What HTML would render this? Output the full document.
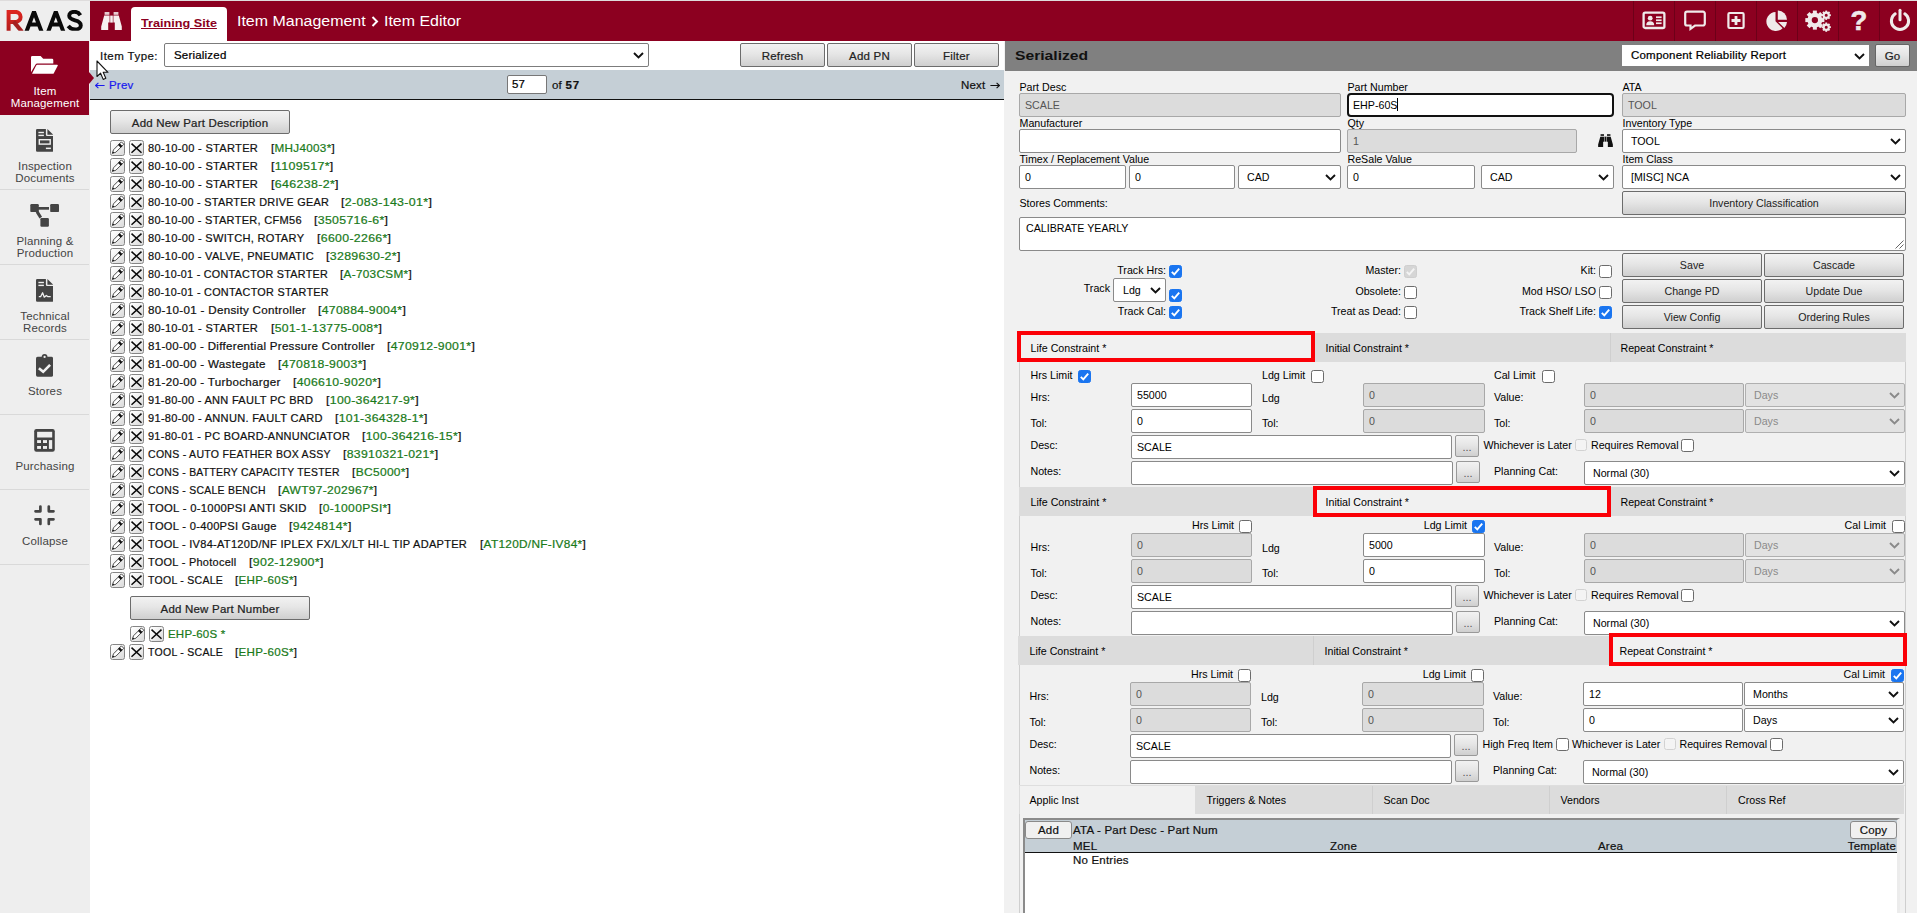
<!DOCTYPE html><html><head><meta charset="utf-8"><title>Item Editor</title><style>
*{box-sizing:border-box;margin:0;padding:0}
html,body{width:1917px;height:913px;overflow:hidden;background:#fff}
body{font-family:"Liberation Sans",sans-serif;font-size:12px;color:#000;position:relative}
.abs{position:absolute}
.v{font-family:"Liberation Sans",sans-serif;font-size:11.5px;letter-spacing:.2px;white-space:nowrap;-webkit-text-stroke:.22px}
.a{font-family:"Liberation Sans",sans-serif;font-size:10.67px;white-space:nowrap;color:#000}
#hdr{left:90px;top:0;width:1827px;height:41px;background:#8c0020}
#topline{left:0;top:0;width:1917px;height:1px;background:#dedcdc}
#logo{left:0;top:0;width:90px;height:41px;background:#eeeeee}
#side{left:0;top:41px;width:90px;height:872px;background:#eeeeee}
.sitem{position:absolute;left:0;width:89px;height:75px;border-bottom:1px solid #d9d9d9;text-align:center;color:#444}
.sitem .t{position:absolute;left:0;width:90px;text-align:center;font-size:11.5px;letter-spacing:.15px;line-height:12px;color:#444}
.sitem.act{background:#8c0020;border-bottom:none}
.sitem.act .t{color:#fff}
.sitem svg{position:absolute}
.btn{position:absolute;border:1px solid #6c6c6c;border-radius:2px;background:linear-gradient(#f2f2f2,#e6e6e6 45%,#cfcfcf);color:#222;text-align:center;white-space:nowrap}
.inp{position:absolute;border:1px solid #8a8a8a;border-radius:2px;background:#fff;height:24px;font-size:10.67px;line-height:22px;padding-left:5px;color:#000;white-space:nowrap;overflow:hidden}
.inp.dis{background:#dcdcdc;color:#555;border-color:#a8a8a8}
.sel{position:absolute;border:1px solid #8a8a8a;border-radius:2px;background:#fff;height:24px;font-size:10.67px;line-height:22px;padding-left:8px;color:#000;white-space:nowrap;overflow:hidden}
.sel.dis{background:#e2e2e2;color:#8a8a8a;border-color:#b0b0b0}
.sel svg{position:absolute;right:4px;top:7.5px}
.cb{position:absolute;width:13px;height:13px;border:1px solid #6b6b6b;border-radius:2.5px;background:#fff}
.cb.on{background:#1a75f0;border-color:#1a75f0}
.cb.dison{background:#d6d6d6;border-color:#cfcfcf}
.cb.disoff{background:#f4f4f4;border-color:#d2d2d2}
.cb svg{position:absolute;left:-1px;top:-1px}
.row{position:absolute;left:110px;height:18px}
.ib{position:absolute;top:0;width:15px;height:16px;border:1px solid #858585;border-radius:2.5px;background:linear-gradient(135deg,#fbfbfb 20%,#d9d9d9)}
.ib svg{position:absolute;left:0;top:0}
.row .tx{position:absolute;left:38px;top:1px;line-height:14px;color:#111}
.row .tx b{font-weight:normal;color:#1a7a1a}
.tabrow{position:absolute;background:#dcdcdc}
.tabsep{position:absolute;width:1px;background:#cfcfcf}
.redbox{position:absolute;border:4px solid #fb0007;background:#f1f1f1}
</style></head><body>
<div class="abs" id="hdr"></div>
<div class="abs" id="logo"></div>
<svg class="abs" style="left:0;top:0" width="90" height="41" viewBox="0 0 90 41"><defs><linearGradient id="rg" x1="0" y1="0" x2="0" y2="1"><stop offset="0" stop-color="#dc2620"/><stop offset="1" stop-color="#b01c1c"/></linearGradient><clipPath id="lc"><rect x="0" y="10" width="90" height="20.8"/></clipPath></defs><g clip-path="url(#lc)"><path d="M8.6 32 V11.9 H15.6 a5 5 0 0 1 0 10 H9.5" fill="none" stroke="url(#rg)" stroke-width="4" stroke-linejoin="miter"/><path d="M13.6 21.6 L22 31.8" fill="none" stroke="#a51f1f" stroke-width="4.1"/><path d="M26.3 32 L34 11.6 L41.7 32 M29.6 24.6 H38.4" fill="none" stroke="#0a0a0a" stroke-width="4" stroke-linejoin="miter" stroke-miterlimit="2"/><path d="M48.1 32 L55.8 11.6 L63.5 32 M51.4 24.6 H60.2" fill="none" stroke="#0a0a0a" stroke-width="4" stroke-linejoin="miter" stroke-miterlimit="2"/><path d="M80.4 15.2 C79 13 77 11.8 74.4 11.8 C71.3 11.8 69.2 13.4 69.2 15.8 C69.2 18.6 71.6 19.4 75 20.3 C78.6 21.2 80.8 22.4 80.8 25.4 C80.8 28 78.4 29.5 75.2 29.5 C72.4 29.5 70 28.3 68.2 26" fill="none" stroke="#0a0a0a" stroke-width="3.9"/></svg>
<div class="abs" id="topline"></div>
<svg class="abs" style="left:100.5px;top:11.5px" width="21" height="18" viewBox="0 0 21 18"><g fill="#f6efef"><path d="M3.2 3.6 H8.6 V10.6 H7.2 V18 H0.2 V14.6 Z"/><path d="M17.8 3.6 H12.4 V10.6 H13.8 V18 H20.8 V14.6 Z"/><rect x="9.2" y="3.6" width="2.6" height="7"/><rect x="3.6" y="0" width="4.8" height="2.8" opacity=".85"/><rect x="12.6" y="0" width="4.8" height="2.8" opacity=".85"/></g></svg>
<div class="abs" style="left:131px;top:7px;width:96px;height:34px;background:#fff;border-radius:4px 4px 0 0"></div>
<div class="abs" style="left:141px;top:16px;font-size:11.5px;font-weight:bold;color:#8c0020;text-decoration:underline;white-space:nowrap;line-height:14px;transform-origin:0 0;transform:scaleX(1.10)">Training Site</div>
<div class="abs" style="left:237px;top:12px;font-size:14px;color:#fff;white-space:nowrap;line-height:18px;transform-origin:0 0;transform:scaleX(1.14)">Item Management</div>
<div class="abs" style="left:384px;top:12px;font-size:14px;color:#fff;white-space:nowrap;line-height:18px;transform-origin:0 0;transform:scaleX(1.14)">Item Editor</div>
<svg class="abs" style="left:371px;top:16px" width="8" height="11" viewBox="0 0 8 11"><path d="M1.5 1 L6 5.5 L1.5 10" fill="none" stroke="#fff" stroke-width="2"/></svg>
<div class="abs" style="left:1633px;top:1px;width:1px;height:40px;background:#6d0018"></div>
<div class="abs" style="left:1674px;top:1px;width:1px;height:40px;background:#6d0018"></div>
<div class="abs" style="left:1715px;top:1px;width:1px;height:40px;background:#6d0018"></div>
<div class="abs" style="left:1756px;top:1px;width:1px;height:40px;background:#6d0018"></div>
<div class="abs" style="left:1797px;top:1px;width:1px;height:40px;background:#6d0018"></div>
<div class="abs" style="left:1838px;top:1px;width:1px;height:40px;background:#6d0018"></div>
<div class="abs" style="left:1879px;top:1px;width:1px;height:40px;background:#6d0018"></div>
<svg class="abs" style="left:1642px;top:8px" width="24" height="24" viewBox="0 0 24 24"><rect x="1.6" y="4.6" width="20.8" height="15.4" rx="1.6" fill="none" stroke="#f0eaea" stroke-width="2.3"/><circle cx="8.2" cy="10.2" r="2.4" fill="#f0eaea"/><path d="M4.2 17.2 q0 -4 4 -4 q4 0 4 4 z" fill="#f0eaea"/><rect x="14" y="8.4" width="5.6" height="1.7" fill="#f0eaea"/><rect x="14" y="11.4" width="5.6" height="1.7" fill="#f0eaea"/><rect x="14" y="14.4" width="5.6" height="1.7" fill="#f0eaea"/></svg>
<svg class="abs" style="left:1683px;top:8px" width="24" height="24" viewBox="0 0 24 24"><path d="M4 3.7 h16 a1.8 1.8 0 0 1 1.8 1.8 v10.2 a1.8 1.8 0 0 1 -1.8 1.8 h-8 l-4.5 3.4 v-3.4 h-3.5 a1.8 1.8 0 0 1 -1.8 -1.8 v-10.2 a1.8 1.8 0 0 1 1.8 -1.8 z" fill="none" stroke="#f0eaea" stroke-width="2.2"/></svg>
<svg class="abs" style="left:1724px;top:8px" width="24" height="24" viewBox="0 0 24 24"><rect x="4.4" y="5" width="15.2" height="15" rx="1.2" fill="none" stroke="#f0eaea" stroke-width="2.2"/><path d="M12 8 v9 M7.5 12.5 h9" stroke="#f0eaea" stroke-width="2.8"/></svg>
<svg class="abs" style="left:1765px;top:8px" width="24" height="24" viewBox="0 0 24 24"><g transform="translate(0,1)"><path d="M10.5 3 A9.5 9.5 0 1 0 17.6 19.2 L10.5 12.2 Z" fill="#f0eaea"/><path d="M12.8 1.6 A9.2 9.2 0 0 1 22 10.8 L12.8 10.8 Z" fill="#f0eaea"/><path d="M13.2 13 L22 13 A9.3 9.3 0 0 1 19.4 18.9 Z" fill="#f0eaea"/></g></svg>
<svg class="abs" style="left:1805px;top:7px" width="26" height="26" viewBox="0 0 24 24"><circle cx="9.1" cy="12.1" r="4.882" fill="none" stroke="#f0eaea" stroke-width="3.964"/><rect x="7.252" y="3.3" width="3.696" height="4.4" fill="#f0eaea" transform="rotate(0 9.1 12.1)"/><rect x="7.252" y="3.3" width="3.696" height="4.4" fill="#f0eaea" transform="rotate(45 9.1 12.1)"/><rect x="7.252" y="3.3" width="3.696" height="4.4" fill="#f0eaea" transform="rotate(90 9.1 12.1)"/><rect x="7.252" y="3.3" width="3.696" height="4.4" fill="#f0eaea" transform="rotate(135 9.1 12.1)"/><rect x="7.252" y="3.3" width="3.696" height="4.4" fill="#f0eaea" transform="rotate(180 9.1 12.1)"/><rect x="7.252" y="3.3" width="3.696" height="4.4" fill="#f0eaea" transform="rotate(225 9.1 12.1)"/><rect x="7.252" y="3.3" width="3.696" height="4.4" fill="#f0eaea" transform="rotate(270 9.1 12.1)"/><rect x="7.252" y="3.3" width="3.696" height="4.4" fill="#f0eaea" transform="rotate(315 9.1 12.1)"/><circle cx="19.6" cy="7.6" r="2.377" fill="none" stroke="#f0eaea" stroke-width="1.954"/><rect x="18.75" y="3.3" width="1.7" height="2.15" fill="#f0eaea" transform="rotate(0 19.6 7.6)"/><rect x="18.75" y="3.3" width="1.7" height="2.15" fill="#f0eaea" transform="rotate(45 19.6 7.6)"/><rect x="18.75" y="3.3" width="1.7" height="2.15" fill="#f0eaea" transform="rotate(90 19.6 7.6)"/><rect x="18.75" y="3.3" width="1.7" height="2.15" fill="#f0eaea" transform="rotate(135 19.6 7.6)"/><rect x="18.75" y="3.3" width="1.7" height="2.15" fill="#f0eaea" transform="rotate(180 19.6 7.6)"/><rect x="18.75" y="3.3" width="1.7" height="2.15" fill="#f0eaea" transform="rotate(225 19.6 7.6)"/><rect x="18.75" y="3.3" width="1.7" height="2.15" fill="#f0eaea" transform="rotate(270 19.6 7.6)"/><rect x="18.75" y="3.3" width="1.7" height="2.15" fill="#f0eaea" transform="rotate(315 19.6 7.6)"/><circle cx="19.6" cy="18.6" r="2.377" fill="none" stroke="#f0eaea" stroke-width="1.954"/><rect x="18.75" y="14.3" width="1.7" height="2.15" fill="#f0eaea" transform="rotate(0 19.6 18.6)"/><rect x="18.75" y="14.3" width="1.7" height="2.15" fill="#f0eaea" transform="rotate(45 19.6 18.6)"/><rect x="18.75" y="14.3" width="1.7" height="2.15" fill="#f0eaea" transform="rotate(90 19.6 18.6)"/><rect x="18.75" y="14.3" width="1.7" height="2.15" fill="#f0eaea" transform="rotate(135 19.6 18.6)"/><rect x="18.75" y="14.3" width="1.7" height="2.15" fill="#f0eaea" transform="rotate(180 19.6 18.6)"/><rect x="18.75" y="14.3" width="1.7" height="2.15" fill="#f0eaea" transform="rotate(225 19.6 18.6)"/><rect x="18.75" y="14.3" width="1.7" height="2.15" fill="#f0eaea" transform="rotate(270 19.6 18.6)"/><rect x="18.75" y="14.3" width="1.7" height="2.15" fill="#f0eaea" transform="rotate(315 19.6 18.6)"/></svg>
<div class="abs" style="left:1845px;top:4px;width:28px;height:34px;text-align:center;font-size:27.5px;line-height:34px;font-weight:bold;color:#f0eaea;-webkit-text-stroke:.6px #f0eaea">?</div>
<svg class="abs" style="left:1888px;top:8px" width="24" height="24" viewBox="0 0 24 24"><path d="M7.2 5.8 A8.6 8.6 0 1 0 16.8 5.8" fill="none" stroke="#f0eaea" stroke-width="3" stroke-linecap="round"/><path d="M12 2.2 v9.5" stroke="#f0eaea" stroke-width="3" stroke-linecap="round"/></svg>
<div class="abs" id="side"></div>
<div class="sitem act" style="top:41px;height:74px"><svg style="left:31px;top:15.2px" width="27" height="18" viewBox="0 0 27 18"><path d="M0 1.3 a1.3 1.3 0 0 1 1.3 -1.3 H9.6 L12.2 2.8 H21 a1.3 1.3 0 0 1 1.3 1.3 V7.6 H6.4 a2.2 2.2 0 0 0 -2 1.2 L0 16.2 Z" fill="#fff"/><path d="M6.2 8.7 H26.1 a.7 .7 0 0 1 .6 1 L22.8 17.2 a1 1 0 0 1 -.9 .5 H1 L5.2 9.4 a1.1 1.1 0 0 1 1 -.7 Z" fill="#fff"/></svg><div class="t" style="top:44px">Item</div><div class="t" style="top:56px">Management</div></div>
<div class="sitem" style="top:115px;height:75px"><svg style="left:36px;top:14px" width="17.3" height="22.8" viewBox="0 0 17.3 22.8"><path d="M0 1.2 a1.2 1.2 0 0 1 1.2 -1.2 H9.9 V5.7 a1.3 1.3 0 0 0 1.3 1.3 H17.3 V21.6 a1.2 1.2 0 0 1 -1.2 1.2 H1.2 a1.2 1.2 0 0 1 -1.2 -1.2 Z M11.4 0 L17.3 5.7 H11.4 Z" fill="#444"/><rect x="2.4" y="2.8" width="5.5" height="1.4" fill="#f0f0f0"/><rect x="2.4" y="5.7" width="5.5" height="1.4" fill="#f0f0f0"/><rect x="3.3" y="10.7" width="10.9" height="4.4" fill="none" stroke="#f0f0f0" stroke-width="1.4"/><rect x="9.9" y="18.6" width="5" height="1.5" fill="#f0f0f0"/></svg><div class="t" style="top:45px">Inspection</div><div class="t" style="top:57px">Documents</div></div>
<div class="sitem" style="top:190px;height:75px"><svg style="left:30px;top:14px" width="30" height="24" viewBox="0 0 30 24"><rect x="0.3" y="0" width="8.5" height="8.1" rx="1.2" fill="#444"/><rect x="20.2" y="0" width="8.8" height="8.1" rx="1.2" fill="#444"/><rect x="10.4" y="14" width="8.5" height="8.8" rx="1.2" fill="#444"/><rect x="8" y="3" width="11" height="2.7" fill="#444"/><path d="M7 7.6 L10.8 13.6" stroke="#444" stroke-width="3"/></svg><div class="t" style="top:45px">Planning &amp;</div><div class="t" style="top:57px">Production</div></div>
<div class="sitem" style="top:265px;height:75px"><svg style="left:36px;top:14px" width="17.3" height="22.8" viewBox="0 0 17.3 22.8"><path d="M0 1.2 a1.2 1.2 0 0 1 1.2 -1.2 H9.9 V5.7 a1.3 1.3 0 0 0 1.3 1.3 H17.3 V21.6 a1.2 1.2 0 0 1 -1.2 1.2 H1.2 a1.2 1.2 0 0 1 -1.2 -1.2 Z M11.4 0 L17.3 5.7 H11.4 Z" fill="#444"/><rect x="2.4" y="2.8" width="5.5" height="1.4" fill="#f0f0f0"/><rect x="2.4" y="5.7" width="5.5" height="1.4" fill="#f0f0f0"/><path d="M2.8 17.7 H4.6 L6.6 13.8 L8.3 18.2 L10.3 16.4 L12 17.7 H14.7" fill="none" stroke="#f0f0f0" stroke-width="1.3" stroke-linejoin="round"/></svg><div class="t" style="top:45px">Technical</div><div class="t" style="top:57px">Records</div></div>
<div class="sitem" style="top:340px;height:75px"><svg style="left:36px;top:14px" width="17.2" height="23" viewBox="0 0 17.2 23"><rect x="0" y="2.8" width="17.1" height="19.9" rx="1.6" fill="#444"/><circle cx="8.6" cy="2.9" r="2.9" fill="#444"/><circle cx="8.6" cy="2.9" r="1.15" fill="#eee"/><path d="M2.9 14.2 L7.2 17.8 L14.1 10.9" fill="none" stroke="#f2f2f2" stroke-width="2.6"/></svg><div class="t" style="top:45px">Stores</div></div>
<div class="sitem" style="top:415px;height:75px"><svg style="left:34px;top:14px" width="21" height="23" viewBox="0 0 21 23"><rect x="0.2" y="0" width="20.6" height="22.8" rx="2.2" fill="#444"/><rect x="3.1" y="2.8" width="15.1" height="5.7" fill="#eee"/><rect x="3.1" y="11.1" width="3.9" height="2.9" fill="#eee"/><rect x="9" y="11.1" width="4" height="2.9" fill="#eee"/><rect x="3.1" y="17" width="3.9" height="2.9" fill="#eee"/><rect x="9" y="17" width="4" height="2.9" fill="#eee"/><rect x="14.9" y="11.1" width="3.3" height="8.8" fill="#eee"/></svg><div class="t" style="top:45px">Purchasing</div></div>
<div class="sitem" style="top:490px;height:75px"><svg style="left:34px;top:15px" width="21" height="21" viewBox="0 0 21 21"><path d="M1.5 6.3 H6.4 V1.6 M14.8 1.6 V6.3 H19.5 M1.5 14.3 H6.4 V19 M19.5 14.3 H14.8 V19" fill="none" stroke="#444" stroke-width="2.7" stroke-linecap="round" stroke-linejoin="round"/></svg><div class="t" style="top:45px">Collapse</div></div>
<svg class="abs" style="left:88px;top:71.5px;z-index:5" width="7" height="12" viewBox="0 0 7 12"><path d="M0 0 H1 L6 6 L1 12 H0 z" fill="#8c0020"/></svg>
<div class="abs v" style="left:100px;top:48px;line-height:16px;color:#111;letter-spacing:.45px">Item Type:</div>
<div class="sel v" style="left:164px;top:43px;width:485px;height:24px;line-height:23px;padding-left:9px;font-size:11.5px;border-color:#7c7c7c">Serialized<svg width="11" height="7" viewBox="0 0 11 7"><path d="M1 1 L5.5 5.5 L10 1" fill="none" stroke="#111" stroke-width="1.9"/></svg></div>
<div class="btn v" style="left:740px;top:43px;width:85px;height:24px;line-height:24px;font-size:11.5px">Refresh</div>
<div class="btn v" style="left:827px;top:43px;width:85px;height:24px;line-height:24px;font-size:11.5px">Add PN</div>
<div class="btn v" style="left:914px;top:43px;width:85px;height:24px;line-height:24px;font-size:11.5px">Filter</div>
<div class="abs" style="left:90px;top:70px;width:914px;height:30px;background:#c5cfd6;border-bottom:1px solid #111"></div>
<svg class="abs" style="left:95px;top:82px" width="10" height="7" viewBox="0 0 10 7"><path d="M0.6 3.5 H9.6 M3.4 0.8 L0.6 3.5 L3.4 6.2" fill="none" stroke="#1a1aee" stroke-width="1.1"/></svg>
<div class="abs v" style="left:109px;top:77px;color:#1a1aee;line-height:16px">Prev</div>
<div class="abs v" style="left:961px;top:77px;color:#111;line-height:16px">Next</div>
<svg class="abs" style="left:990px;top:82px" width="10" height="7" viewBox="0 0 10 7"><path d="M0.4 3.5 H9.4 M6.6 0.8 L9.4 3.5 L6.6 6.2" fill="none" stroke="#111" stroke-width="1.1"/></svg>
<div class="inp v" style="left:507px;top:75px;width:40px;height:19px;line-height:17px;padding-left:4px;font-size:11.5px;border-color:#777">57</div>
<div class="abs v" style="left:552px;top:77px;color:#111;line-height:16px">of <b style="letter-spacing:.9px">57</b></div>
<div class="btn v" style="left:110px;top:110px;width:180px;height:24px;line-height:24.5px;font-size:11.5px">Add New Part Description</div>
<div class="row" style="top:140px;left:110px"><div class="ib" style="left:0"><svg width="15" height="16" viewBox="0 0 15 16" style="left:-1px;top:-1px"><g transform="translate(2.3,13.4) rotate(-45)"><path d="M0 0 L3.4 -1.7 L14.6 -1.7 L14.6 1.7 L3.4 1.7 Z" fill="#fff" stroke="#3a3a3a" stroke-width=".85" stroke-linejoin="round"/><path d="M0 0 L1.9 -0.95 L1.9 0.95 Z" fill="#111"/><rect x="10" y="-2" width="2.3" height="4" fill="#111"/></g></svg></div><div class="ib" style="left:19px"><svg width="15" height="16" viewBox="0 0 15 16" style="left:-1px;top:-1px"><path d="M2.5 3.6 L12.5 12.7 M12.5 3.6 L2.5 12.7" stroke="#0a0a0a" stroke-width="1.5"/></svg></div><div class="tx v" style="left:37.8px;letter-spacing:.3px;transform-origin:0 0;transform:scaleX(0.9641)">80-10-00 - STARTER</div><div class="tx v" style="left:160.568px;letter-spacing:.3px;transform-origin:0 0;transform:scaleX(1.0148)">[<b>MHJ4003*</b>]</div></div>
<div class="row" style="top:158px;left:110px"><div class="ib" style="left:0"><svg width="15" height="16" viewBox="0 0 15 16" style="left:-1px;top:-1px"><g transform="translate(2.3,13.4) rotate(-45)"><path d="M0 0 L3.4 -1.7 L14.6 -1.7 L14.6 1.7 L3.4 1.7 Z" fill="#fff" stroke="#3a3a3a" stroke-width=".85" stroke-linejoin="round"/><path d="M0 0 L1.9 -0.95 L1.9 0.95 Z" fill="#111"/><rect x="10" y="-2" width="2.3" height="4" fill="#111"/></g></svg></div><div class="ib" style="left:19px"><svg width="15" height="16" viewBox="0 0 15 16" style="left:-1px;top:-1px"><path d="M2.5 3.6 L12.5 12.7 M12.5 3.6 L2.5 12.7" stroke="#0a0a0a" stroke-width="1.5"/></svg></div><div class="tx v" style="left:37.8px;letter-spacing:.3px;transform-origin:0 0;transform:scaleX(0.9641)">80-10-00 - STARTER</div><div class="tx v" style="left:160.568px;letter-spacing:.3px;transform-origin:0 0;transform:scaleX(1.0840)">[<b>1109517*</b>]</div></div>
<div class="row" style="top:176px;left:110px"><div class="ib" style="left:0"><svg width="15" height="16" viewBox="0 0 15 16" style="left:-1px;top:-1px"><g transform="translate(2.3,13.4) rotate(-45)"><path d="M0 0 L3.4 -1.7 L14.6 -1.7 L14.6 1.7 L3.4 1.7 Z" fill="#fff" stroke="#3a3a3a" stroke-width=".85" stroke-linejoin="round"/><path d="M0 0 L1.9 -0.95 L1.9 0.95 Z" fill="#111"/><rect x="10" y="-2" width="2.3" height="4" fill="#111"/></g></svg></div><div class="ib" style="left:19px"><svg width="15" height="16" viewBox="0 0 15 16" style="left:-1px;top:-1px"><path d="M2.5 3.6 L12.5 12.7 M12.5 3.6 L2.5 12.7" stroke="#0a0a0a" stroke-width="1.5"/></svg></div><div class="tx v" style="left:37.8px;letter-spacing:.3px;transform-origin:0 0;transform:scaleX(0.9641)">80-10-00 - STARTER</div><div class="tx v" style="left:160.568px;letter-spacing:.3px;transform-origin:0 0;transform:scaleX(1.0804)">[<b>646238-2*</b>]</div></div>
<div class="row" style="top:194px;left:110px"><div class="ib" style="left:0"><svg width="15" height="16" viewBox="0 0 15 16" style="left:-1px;top:-1px"><g transform="translate(2.3,13.4) rotate(-45)"><path d="M0 0 L3.4 -1.7 L14.6 -1.7 L14.6 1.7 L3.4 1.7 Z" fill="#fff" stroke="#3a3a3a" stroke-width=".85" stroke-linejoin="round"/><path d="M0 0 L1.9 -0.95 L1.9 0.95 Z" fill="#111"/><rect x="10" y="-2" width="2.3" height="4" fill="#111"/></g></svg></div><div class="ib" style="left:19px"><svg width="15" height="16" viewBox="0 0 15 16" style="left:-1px;top:-1px"><path d="M2.5 3.6 L12.5 12.7 M12.5 3.6 L2.5 12.7" stroke="#0a0a0a" stroke-width="1.5"/></svg></div><div class="tx v" style="left:37.8px;letter-spacing:.3px;transform-origin:0 0;transform:scaleX(0.9446)">80-10-00 - STARTER DRIVE GEAR</div><div class="tx v" style="left:231.48px;letter-spacing:.3px;transform-origin:0 0;transform:scaleX(1.0805)">[<b>2-083-143-01*</b>]</div></div>
<div class="row" style="top:212px;left:110px"><div class="ib" style="left:0"><svg width="15" height="16" viewBox="0 0 15 16" style="left:-1px;top:-1px"><g transform="translate(2.3,13.4) rotate(-45)"><path d="M0 0 L3.4 -1.7 L14.6 -1.7 L14.6 1.7 L3.4 1.7 Z" fill="#fff" stroke="#3a3a3a" stroke-width=".85" stroke-linejoin="round"/><path d="M0 0 L1.9 -0.95 L1.9 0.95 Z" fill="#111"/><rect x="10" y="-2" width="2.3" height="4" fill="#111"/></g></svg></div><div class="ib" style="left:19px"><svg width="15" height="16" viewBox="0 0 15 16" style="left:-1px;top:-1px"><path d="M2.5 3.6 L12.5 12.7 M12.5 3.6 L2.5 12.7" stroke="#0a0a0a" stroke-width="1.5"/></svg></div><div class="tx v" style="left:37.8px;letter-spacing:.3px;transform-origin:0 0;transform:scaleX(0.9590)">80-10-00 - STARTER, CFM56</div><div class="tx v" style="left:204.286px;letter-spacing:.3px;transform-origin:0 0;transform:scaleX(1.0702)">[<b>3505716-6*</b>]</div></div>
<div class="row" style="top:230px;left:110px"><div class="ib" style="left:0"><svg width="15" height="16" viewBox="0 0 15 16" style="left:-1px;top:-1px"><g transform="translate(2.3,13.4) rotate(-45)"><path d="M0 0 L3.4 -1.7 L14.6 -1.7 L14.6 1.7 L3.4 1.7 Z" fill="#fff" stroke="#3a3a3a" stroke-width=".85" stroke-linejoin="round"/><path d="M0 0 L1.9 -0.95 L1.9 0.95 Z" fill="#111"/><rect x="10" y="-2" width="2.3" height="4" fill="#111"/></g></svg></div><div class="ib" style="left:19px"><svg width="15" height="16" viewBox="0 0 15 16" style="left:-1px;top:-1px"><path d="M2.5 3.6 L12.5 12.7 M12.5 3.6 L2.5 12.7" stroke="#0a0a0a" stroke-width="1.5"/></svg></div><div class="tx v" style="left:37.8px;letter-spacing:.3px;transform-origin:0 0;transform:scaleX(0.9627)">80-10-00 - SWITCH, ROTARY</div><div class="tx v" style="left:206.695px;letter-spacing:.3px;transform-origin:0 0;transform:scaleX(1.0702)">[<b>6600-2266*</b>]</div></div>
<div class="row" style="top:248px;left:110px"><div class="ib" style="left:0"><svg width="15" height="16" viewBox="0 0 15 16" style="left:-1px;top:-1px"><g transform="translate(2.3,13.4) rotate(-45)"><path d="M0 0 L3.4 -1.7 L14.6 -1.7 L14.6 1.7 L3.4 1.7 Z" fill="#fff" stroke="#3a3a3a" stroke-width=".85" stroke-linejoin="round"/><path d="M0 0 L1.9 -0.95 L1.9 0.95 Z" fill="#111"/><rect x="10" y="-2" width="2.3" height="4" fill="#111"/></g></svg></div><div class="ib" style="left:19px"><svg width="15" height="16" viewBox="0 0 15 16" style="left:-1px;top:-1px"><path d="M2.5 3.6 L12.5 12.7 M12.5 3.6 L2.5 12.7" stroke="#0a0a0a" stroke-width="1.5"/></svg></div><div class="tx v" style="left:37.8px;letter-spacing:.3px;transform-origin:0 0;transform:scaleX(0.9592)">80-10-00 - VALVE, PNEUMATIC</div><div class="tx v" style="left:216.334px;letter-spacing:.3px;transform-origin:0 0;transform:scaleX(1.0752)">[<b>3289630-2*</b>]</div></div>
<div class="row" style="top:266px;left:110px"><div class="ib" style="left:0"><svg width="15" height="16" viewBox="0 0 15 16" style="left:-1px;top:-1px"><g transform="translate(2.3,13.4) rotate(-45)"><path d="M0 0 L3.4 -1.7 L14.6 -1.7 L14.6 1.7 L3.4 1.7 Z" fill="#fff" stroke="#3a3a3a" stroke-width=".85" stroke-linejoin="round"/><path d="M0 0 L1.9 -0.95 L1.9 0.95 Z" fill="#111"/><rect x="10" y="-2" width="2.3" height="4" fill="#111"/></g></svg></div><div class="ib" style="left:19px"><svg width="15" height="16" viewBox="0 0 15 16" style="left:-1px;top:-1px"><path d="M2.5 3.6 L12.5 12.7 M12.5 3.6 L2.5 12.7" stroke="#0a0a0a" stroke-width="1.5"/></svg></div><div class="tx v" style="left:37.8px;letter-spacing:.3px;transform-origin:0 0;transform:scaleX(0.9366)">80-10-01 - CONTACTOR STARTER</div><div class="tx v" style="left:230.448px;letter-spacing:.3px;transform-origin:0 0;transform:scaleX(1.0218)">[<b>A-703CSM*</b>]</div></div>
<div class="row" style="top:284px;left:110px"><div class="ib" style="left:0"><svg width="15" height="16" viewBox="0 0 15 16" style="left:-1px;top:-1px"><g transform="translate(2.3,13.4) rotate(-45)"><path d="M0 0 L3.4 -1.7 L14.6 -1.7 L14.6 1.7 L3.4 1.7 Z" fill="#fff" stroke="#3a3a3a" stroke-width=".85" stroke-linejoin="round"/><path d="M0 0 L1.9 -0.95 L1.9 0.95 Z" fill="#111"/><rect x="10" y="-2" width="2.3" height="4" fill="#111"/></g></svg></div><div class="ib" style="left:19px"><svg width="15" height="16" viewBox="0 0 15 16" style="left:-1px;top:-1px"><path d="M2.5 3.6 L12.5 12.7 M12.5 3.6 L2.5 12.7" stroke="#0a0a0a" stroke-width="1.5"/></svg></div><div class="tx v" style="left:37.8px;letter-spacing:.3px;transform-origin:0 0;transform:scaleX(0.9413)">80-10-01 - CONTACTOR STARTER</div></div>
<div class="row" style="top:302px;left:110px"><div class="ib" style="left:0"><svg width="15" height="16" viewBox="0 0 15 16" style="left:-1px;top:-1px"><g transform="translate(2.3,13.4) rotate(-45)"><path d="M0 0 L3.4 -1.7 L14.6 -1.7 L14.6 1.7 L3.4 1.7 Z" fill="#fff" stroke="#3a3a3a" stroke-width=".85" stroke-linejoin="round"/><path d="M0 0 L1.9 -0.95 L1.9 0.95 Z" fill="#111"/><rect x="10" y="-2" width="2.3" height="4" fill="#111"/></g></svg></div><div class="ib" style="left:19px"><svg width="15" height="16" viewBox="0 0 15 16" style="left:-1px;top:-1px"><path d="M2.5 3.6 L12.5 12.7 M12.5 3.6 L2.5 12.7" stroke="#0a0a0a" stroke-width="1.5"/></svg></div><div class="tx v" style="left:37.8px;letter-spacing:.3px;transform-origin:0 0;transform:scaleX(1.0106)">80-10-01 - Density Controller</div><div class="tx v" style="left:208.417px;letter-spacing:.3px;transform-origin:0 0;transform:scaleX(1.0636)">[<b>470884-9004*</b>]</div></div>
<div class="row" style="top:320px;left:110px"><div class="ib" style="left:0"><svg width="15" height="16" viewBox="0 0 15 16" style="left:-1px;top:-1px"><g transform="translate(2.3,13.4) rotate(-45)"><path d="M0 0 L3.4 -1.7 L14.6 -1.7 L14.6 1.7 L3.4 1.7 Z" fill="#fff" stroke="#3a3a3a" stroke-width=".85" stroke-linejoin="round"/><path d="M0 0 L1.9 -0.95 L1.9 0.95 Z" fill="#111"/><rect x="10" y="-2" width="2.3" height="4" fill="#111"/></g></svg></div><div class="ib" style="left:19px"><svg width="15" height="16" viewBox="0 0 15 16" style="left:-1px;top:-1px"><path d="M2.5 3.6 L12.5 12.7 M12.5 3.6 L2.5 12.7" stroke="#0a0a0a" stroke-width="1.5"/></svg></div><div class="tx v" style="left:37.8px;letter-spacing:.3px;transform-origin:0 0;transform:scaleX(0.9641)">80-10-01 - STARTER</div><div class="tx v" style="left:160.568px;letter-spacing:.3px;transform-origin:0 0;transform:scaleX(1.0639)">[<b>501-1-13775-008*</b>]</div></div>
<div class="row" style="top:338px;left:110px"><div class="ib" style="left:0"><svg width="15" height="16" viewBox="0 0 15 16" style="left:-1px;top:-1px"><g transform="translate(2.3,13.4) rotate(-45)"><path d="M0 0 L3.4 -1.7 L14.6 -1.7 L14.6 1.7 L3.4 1.7 Z" fill="#fff" stroke="#3a3a3a" stroke-width=".85" stroke-linejoin="round"/><path d="M0 0 L1.9 -0.95 L1.9 0.95 Z" fill="#111"/><rect x="10" y="-2" width="2.3" height="4" fill="#111"/></g></svg></div><div class="ib" style="left:19px"><svg width="15" height="16" viewBox="0 0 15 16" style="left:-1px;top:-1px"><path d="M2.5 3.6 L12.5 12.7 M12.5 3.6 L2.5 12.7" stroke="#0a0a0a" stroke-width="1.5"/></svg></div><div class="tx v" style="left:37.8px;letter-spacing:.3px;transform-origin:0 0;transform:scaleX(1.0030)">81-00-00 - Differential Pressure Controller</div><div class="tx v" style="left:277.263px;letter-spacing:.3px;transform-origin:0 0;transform:scaleX(1.0636)">[<b>470912-9001*</b>]</div></div>
<div class="row" style="top:356px;left:110px"><div class="ib" style="left:0"><svg width="15" height="16" viewBox="0 0 15 16" style="left:-1px;top:-1px"><g transform="translate(2.3,13.4) rotate(-45)"><path d="M0 0 L3.4 -1.7 L14.6 -1.7 L14.6 1.7 L3.4 1.7 Z" fill="#fff" stroke="#3a3a3a" stroke-width=".85" stroke-linejoin="round"/><path d="M0 0 L1.9 -0.95 L1.9 0.95 Z" fill="#111"/><rect x="10" y="-2" width="2.3" height="4" fill="#111"/></g></svg></div><div class="ib" style="left:19px"><svg width="15" height="16" viewBox="0 0 15 16" style="left:-1px;top:-1px"><path d="M2.5 3.6 L12.5 12.7 M12.5 3.6 L2.5 12.7" stroke="#0a0a0a" stroke-width="1.5"/></svg></div><div class="tx v" style="left:37.8px;letter-spacing:.3px;transform-origin:0 0;transform:scaleX(1.0079)">81-00-00 - Wastegate</div><div class="tx v" style="left:168.141px;letter-spacing:.3px;transform-origin:0 0;transform:scaleX(1.0677)">[<b>470818-9003*</b>]</div></div>
<div class="row" style="top:374px;left:110px"><div class="ib" style="left:0"><svg width="15" height="16" viewBox="0 0 15 16" style="left:-1px;top:-1px"><g transform="translate(2.3,13.4) rotate(-45)"><path d="M0 0 L3.4 -1.7 L14.6 -1.7 L14.6 1.7 L3.4 1.7 Z" fill="#fff" stroke="#3a3a3a" stroke-width=".85" stroke-linejoin="round"/><path d="M0 0 L1.9 -0.95 L1.9 0.95 Z" fill="#111"/><rect x="10" y="-2" width="2.3" height="4" fill="#111"/></g></svg></div><div class="ib" style="left:19px"><svg width="15" height="16" viewBox="0 0 15 16" style="left:-1px;top:-1px"><path d="M2.5 3.6 L12.5 12.7 M12.5 3.6 L2.5 12.7" stroke="#0a0a0a" stroke-width="1.5"/></svg></div><div class="tx v" style="left:37.8px;letter-spacing:.3px;transform-origin:0 0;transform:scaleX(1.0075)">81-20-00 - Turbocharger</div><div class="tx v" style="left:182.943px;letter-spacing:.3px;transform-origin:0 0;transform:scaleX(1.0636)">[<b>406610-9020*</b>]</div></div>
<div class="row" style="top:392px;left:110px"><div class="ib" style="left:0"><svg width="15" height="16" viewBox="0 0 15 16" style="left:-1px;top:-1px"><g transform="translate(2.3,13.4) rotate(-45)"><path d="M0 0 L3.4 -1.7 L14.6 -1.7 L14.6 1.7 L3.4 1.7 Z" fill="#fff" stroke="#3a3a3a" stroke-width=".85" stroke-linejoin="round"/><path d="M0 0 L1.9 -0.95 L1.9 0.95 Z" fill="#111"/><rect x="10" y="-2" width="2.3" height="4" fill="#111"/></g></svg></div><div class="ib" style="left:19px"><svg width="15" height="16" viewBox="0 0 15 16" style="left:-1px;top:-1px"><path d="M2.5 3.6 L12.5 12.7 M12.5 3.6 L2.5 12.7" stroke="#0a0a0a" stroke-width="1.5"/></svg></div><div class="tx v" style="left:37.8px;letter-spacing:.3px;transform-origin:0 0;transform:scaleX(0.9576)">91-80-00 - ANN FAULT PC BRD</div><div class="tx v" style="left:215.645px;letter-spacing:.3px;transform-origin:0 0;transform:scaleX(1.0685)">[<b>100-364217-9*</b>]</div></div>
<div class="row" style="top:410px;left:110px"><div class="ib" style="left:0"><svg width="15" height="16" viewBox="0 0 15 16" style="left:-1px;top:-1px"><g transform="translate(2.3,13.4) rotate(-45)"><path d="M0 0 L3.4 -1.7 L14.6 -1.7 L14.6 1.7 L3.4 1.7 Z" fill="#fff" stroke="#3a3a3a" stroke-width=".85" stroke-linejoin="round"/><path d="M0 0 L1.9 -0.95 L1.9 0.95 Z" fill="#111"/><rect x="10" y="-2" width="2.3" height="4" fill="#111"/></g></svg></div><div class="ib" style="left:19px"><svg width="15" height="16" viewBox="0 0 15 16" style="left:-1px;top:-1px"><path d="M2.5 3.6 L12.5 12.7 M12.5 3.6 L2.5 12.7" stroke="#0a0a0a" stroke-width="1.5"/></svg></div><div class="tx v" style="left:37.8px;letter-spacing:.3px;transform-origin:0 0;transform:scaleX(0.9619)">91-80-00 - ANNUN. FAULT CARD</div><div class="tx v" style="left:225.284px;letter-spacing:.3px;transform-origin:0 0;transform:scaleX(1.0645)">[<b>101-364328-1*</b>]</div></div>
<div class="row" style="top:428px;left:110px"><div class="ib" style="left:0"><svg width="15" height="16" viewBox="0 0 15 16" style="left:-1px;top:-1px"><g transform="translate(2.3,13.4) rotate(-45)"><path d="M0 0 L3.4 -1.7 L14.6 -1.7 L14.6 1.7 L3.4 1.7 Z" fill="#fff" stroke="#3a3a3a" stroke-width=".85" stroke-linejoin="round"/><path d="M0 0 L1.9 -0.95 L1.9 0.95 Z" fill="#111"/><rect x="10" y="-2" width="2.3" height="4" fill="#111"/></g></svg></div><div class="ib" style="left:19px"><svg width="15" height="16" viewBox="0 0 15 16" style="left:-1px;top:-1px"><path d="M2.5 3.6 L12.5 12.7 M12.5 3.6 L2.5 12.7" stroke="#0a0a0a" stroke-width="1.5"/></svg></div><div class="tx v" style="left:37.8px;letter-spacing:.3px;transform-origin:0 0;transform:scaleX(0.9499)">91-80-01 - PC BOARD-ANNUNCIATOR</div><div class="tx v" style="left:252.478px;letter-spacing:.3px;transform-origin:0 0;transform:scaleX(1.0655)">[<b>100-364216-15*</b>]</div></div>
<div class="row" style="top:446px;left:110px"><div class="ib" style="left:0"><svg width="15" height="16" viewBox="0 0 15 16" style="left:-1px;top:-1px"><g transform="translate(2.3,13.4) rotate(-45)"><path d="M0 0 L3.4 -1.7 L14.6 -1.7 L14.6 1.7 L3.4 1.7 Z" fill="#fff" stroke="#3a3a3a" stroke-width=".85" stroke-linejoin="round"/><path d="M0 0 L1.9 -0.95 L1.9 0.95 Z" fill="#111"/><rect x="10" y="-2" width="2.3" height="4" fill="#111"/></g></svg></div><div class="ib" style="left:19px"><svg width="15" height="16" viewBox="0 0 15 16" style="left:-1px;top:-1px"><path d="M2.5 3.6 L12.5 12.7 M12.5 3.6 L2.5 12.7" stroke="#0a0a0a" stroke-width="1.5"/></svg></div><div class="tx v" style="left:37.8px;letter-spacing:.3px;transform-origin:0 0;transform:scaleX(0.9154)">CONS - AUTO FEATHER BOX ASSY</div><div class="tx v" style="left:233.201px;letter-spacing:.3px;transform-origin:0 0;transform:scaleX(1.0647)">[<b>83910321-021*</b>]</div></div>
<div class="row" style="top:464px;left:110px"><div class="ib" style="left:0"><svg width="15" height="16" viewBox="0 0 15 16" style="left:-1px;top:-1px"><g transform="translate(2.3,13.4) rotate(-45)"><path d="M0 0 L3.4 -1.7 L14.6 -1.7 L14.6 1.7 L3.4 1.7 Z" fill="#fff" stroke="#3a3a3a" stroke-width=".85" stroke-linejoin="round"/><path d="M0 0 L1.9 -0.95 L1.9 0.95 Z" fill="#111"/><rect x="10" y="-2" width="2.3" height="4" fill="#111"/></g></svg></div><div class="ib" style="left:19px"><svg width="15" height="16" viewBox="0 0 15 16" style="left:-1px;top:-1px"><path d="M2.5 3.6 L12.5 12.7 M12.5 3.6 L2.5 12.7" stroke="#0a0a0a" stroke-width="1.5"/></svg></div><div class="tx v" style="left:37.8px;letter-spacing:.3px;transform-origin:0 0;transform:scaleX(0.9036)">CONS - BATTERY CAPACITY TESTER</div><div class="tx v" style="left:242.151px;letter-spacing:.3px;transform-origin:0 0;transform:scaleX(1.0426)">[<b>BC5000*</b>]</div></div>
<div class="row" style="top:482px;left:110px"><div class="ib" style="left:0"><svg width="15" height="16" viewBox="0 0 15 16" style="left:-1px;top:-1px"><g transform="translate(2.3,13.4) rotate(-45)"><path d="M0 0 L3.4 -1.7 L14.6 -1.7 L14.6 1.7 L3.4 1.7 Z" fill="#fff" stroke="#3a3a3a" stroke-width=".85" stroke-linejoin="round"/><path d="M0 0 L1.9 -0.95 L1.9 0.95 Z" fill="#111"/><rect x="10" y="-2" width="2.3" height="4" fill="#111"/></g></svg></div><div class="ib" style="left:19px"><svg width="15" height="16" viewBox="0 0 15 16" style="left:-1px;top:-1px"><path d="M2.5 3.6 L12.5 12.7 M12.5 3.6 L2.5 12.7" stroke="#0a0a0a" stroke-width="1.5"/></svg></div><div class="tx v" style="left:37.8px;letter-spacing:.3px;transform-origin:0 0;transform:scaleX(0.9056)">CONS - SCALE BENCH</div><div class="tx v" style="left:168.141px;letter-spacing:.3px;transform-origin:0 0;transform:scaleX(1.0419)">[<b>AWT97-202967*</b>]</div></div>
<div class="row" style="top:500px;left:110px"><div class="ib" style="left:0"><svg width="15" height="16" viewBox="0 0 15 16" style="left:-1px;top:-1px"><g transform="translate(2.3,13.4) rotate(-45)"><path d="M0 0 L3.4 -1.7 L14.6 -1.7 L14.6 1.7 L3.4 1.7 Z" fill="#fff" stroke="#3a3a3a" stroke-width=".85" stroke-linejoin="round"/><path d="M0 0 L1.9 -0.95 L1.9 0.95 Z" fill="#111"/><rect x="10" y="-2" width="2.3" height="4" fill="#111"/></g></svg></div><div class="ib" style="left:19px"><svg width="15" height="16" viewBox="0 0 15 16" style="left:-1px;top:-1px"><path d="M2.5 3.6 L12.5 12.7 M12.5 3.6 L2.5 12.7" stroke="#0a0a0a" stroke-width="1.5"/></svg></div><div class="tx v" style="left:37.8px;letter-spacing:.3px;transform-origin:0 0;transform:scaleX(0.9806)">TOOL - 0-1000PSI ANTI SKID</div><div class="tx v" style="left:209.105px;letter-spacing:.3px;transform-origin:0 0;transform:scaleX(1.0504)">[<b>0-1000PSI*</b>]</div></div>
<div class="row" style="top:518px;left:110px"><div class="ib" style="left:0"><svg width="15" height="16" viewBox="0 0 15 16" style="left:-1px;top:-1px"><g transform="translate(2.3,13.4) rotate(-45)"><path d="M0 0 L3.4 -1.7 L14.6 -1.7 L14.6 1.7 L3.4 1.7 Z" fill="#fff" stroke="#3a3a3a" stroke-width=".85" stroke-linejoin="round"/><path d="M0 0 L1.9 -0.95 L1.9 0.95 Z" fill="#111"/><rect x="10" y="-2" width="2.3" height="4" fill="#111"/></g></svg></div><div class="ib" style="left:19px"><svg width="15" height="16" viewBox="0 0 15 16" style="left:-1px;top:-1px"><path d="M2.5 3.6 L12.5 12.7 M12.5 3.6 L2.5 12.7" stroke="#0a0a0a" stroke-width="1.5"/></svg></div><div class="tx v" style="left:37.8px;letter-spacing:.3px;transform-origin:0 0;transform:scaleX(0.9690)">TOOL - 0-400PSI Gauge</div><div class="tx v" style="left:179.157px;letter-spacing:.3px;transform-origin:0 0;transform:scaleX(1.0684)">[<b>9424814*</b>]</div></div>
<div class="row" style="top:536px;left:110px"><div class="ib" style="left:0"><svg width="15" height="16" viewBox="0 0 15 16" style="left:-1px;top:-1px"><g transform="translate(2.3,13.4) rotate(-45)"><path d="M0 0 L3.4 -1.7 L14.6 -1.7 L14.6 1.7 L3.4 1.7 Z" fill="#fff" stroke="#3a3a3a" stroke-width=".85" stroke-linejoin="round"/><path d="M0 0 L1.9 -0.95 L1.9 0.95 Z" fill="#111"/><rect x="10" y="-2" width="2.3" height="4" fill="#111"/></g></svg></div><div class="ib" style="left:19px"><svg width="15" height="16" viewBox="0 0 15 16" style="left:-1px;top:-1px"><path d="M2.5 3.6 L12.5 12.7 M12.5 3.6 L2.5 12.7" stroke="#0a0a0a" stroke-width="1.5"/></svg></div><div class="tx v" style="left:37.8px;letter-spacing:.3px;transform-origin:0 0;transform:scaleX(0.9592)">TOOL - IV84-AT120D/NF IPLEX FX/LX/LT HI-L TIP ADAPTER</div><div class="tx v" style="left:369.518px;letter-spacing:.3px;transform-origin:0 0;transform:scaleX(1.0262)">[<b>AT120D/NF-IV84*</b>]</div></div>
<div class="row" style="top:554px;left:110px"><div class="ib" style="left:0"><svg width="15" height="16" viewBox="0 0 15 16" style="left:-1px;top:-1px"><g transform="translate(2.3,13.4) rotate(-45)"><path d="M0 0 L3.4 -1.7 L14.6 -1.7 L14.6 1.7 L3.4 1.7 Z" fill="#fff" stroke="#3a3a3a" stroke-width=".85" stroke-linejoin="round"/><path d="M0 0 L1.9 -0.95 L1.9 0.95 Z" fill="#111"/><rect x="10" y="-2" width="2.3" height="4" fill="#111"/></g></svg></div><div class="ib" style="left:19px"><svg width="15" height="16" viewBox="0 0 15 16" style="left:-1px;top:-1px"><path d="M2.5 3.6 L12.5 12.7 M12.5 3.6 L2.5 12.7" stroke="#0a0a0a" stroke-width="1.5"/></svg></div><div class="tx v" style="left:37.8px;letter-spacing:.3px;transform-origin:0 0;transform:scaleX(0.9512)">TOOL - Photocell</div><div class="tx v" style="left:138.881px;letter-spacing:.3px;transform-origin:0 0;transform:scaleX(1.0752)">[<b>902-12900*</b>]</div></div>
<div class="row" style="top:572px;left:110px"><div class="ib" style="left:0"><svg width="15" height="16" viewBox="0 0 15 16" style="left:-1px;top:-1px"><g transform="translate(2.3,13.4) rotate(-45)"><path d="M0 0 L3.4 -1.7 L14.6 -1.7 L14.6 1.7 L3.4 1.7 Z" fill="#fff" stroke="#3a3a3a" stroke-width=".85" stroke-linejoin="round"/><path d="M0 0 L1.9 -0.95 L1.9 0.95 Z" fill="#111"/><rect x="10" y="-2" width="2.3" height="4" fill="#111"/></g></svg></div><div class="ib" style="left:19px"><svg width="15" height="16" viewBox="0 0 15 16" style="left:-1px;top:-1px"><path d="M2.5 3.6 L12.5 12.7 M12.5 3.6 L2.5 12.7" stroke="#0a0a0a" stroke-width="1.5"/></svg></div><div class="tx v" style="left:37.8px;letter-spacing:.3px;transform-origin:0 0;transform:scaleX(0.9130)">TOOL - SCALE</div><div class="tx v" style="left:125.456px;letter-spacing:.3px;transform-origin:0 0;transform:scaleX(1.0080)">[<b>EHP-60S*</b>]</div></div>
<div class="btn v" style="left:130px;top:596px;width:180px;height:24px;line-height:24.5px;font-size:11.5px">Add New Part Number</div>
<div class="row" style="top:626px;left:130px"><div class="ib" style="left:0"><svg width="15" height="16" viewBox="0 0 15 16" style="left:-1px;top:-1px"><g transform="translate(2.3,13.4) rotate(-45)"><path d="M0 0 L3.4 -1.7 L14.6 -1.7 L14.6 1.7 L3.4 1.7 Z" fill="#fff" stroke="#3a3a3a" stroke-width=".85" stroke-linejoin="round"/><path d="M0 0 L1.9 -0.95 L1.9 0.95 Z" fill="#111"/><rect x="10" y="-2" width="2.3" height="4" fill="#111"/></g></svg></div><div class="ib" style="left:19px"><svg width="15" height="16" viewBox="0 0 15 16" style="left:-1px;top:-1px"><path d="M2.5 3.6 L12.5 12.7 M12.5 3.6 L2.5 12.7" stroke="#0a0a0a" stroke-width="1.5"/></svg></div><div class="tx v" style="left:38px"><b>EHP-60S *</b></div></div>
<div class="row" style="top:644px;left:110px"><div class="ib" style="left:0"><svg width="15" height="16" viewBox="0 0 15 16" style="left:-1px;top:-1px"><g transform="translate(2.3,13.4) rotate(-45)"><path d="M0 0 L3.4 -1.7 L14.6 -1.7 L14.6 1.7 L3.4 1.7 Z" fill="#fff" stroke="#3a3a3a" stroke-width=".85" stroke-linejoin="round"/><path d="M0 0 L1.9 -0.95 L1.9 0.95 Z" fill="#111"/><rect x="10" y="-2" width="2.3" height="4" fill="#111"/></g></svg></div><div class="ib" style="left:19px"><svg width="15" height="16" viewBox="0 0 15 16" style="left:-1px;top:-1px"><path d="M2.5 3.6 L12.5 12.7 M12.5 3.6 L2.5 12.7" stroke="#0a0a0a" stroke-width="1.5"/></svg></div><div class="tx v" style="left:37.8px;letter-spacing:.3px;transform-origin:0 0;transform:scaleX(0.9130)">TOOL - SCALE</div><div class="tx v" style="left:125.456px;letter-spacing:.3px;transform-origin:0 0;transform:scaleX(1.0080)">[<b>EHP-60S*</b>]</div></div>
<svg class="abs" style="left:95.6px;top:59.6px;z-index:6" width="14" height="21" viewBox="0 0 14 21"><path d="M1 1 L1 16.5 L4.6 13.2 L7.2 19.4 L9.8 18.3 L7.2 12.3 L12 12.3 Z" fill="#fff" stroke="#111" stroke-width="1.1" stroke-linejoin="round"/></svg>
<div class="abs" style="left:1004px;top:41px;width:913px;height:872px;background:#f1f1f1"></div>
<div class="abs" style="left:1005px;top:41px;width:912px;height:30px;background:#808080"></div>
<div class="abs" style="left:1015px;top:48px;font-size:13.5px;font-weight:bold;line-height:16px;color:#111;white-space:nowrap;transform-origin:0 0;transform:scaleX(1.16)">Serialized</div>
<div class="sel v" style="left:1621px;top:44px;width:249px;height:23px;line-height:21px;padding-left:9px;font-size:11.5px;border-color:#808080;border-radius:0">Component Reliability Report<svg width="11" height="7" viewBox="0 0 11 7"><path d="M1 1 L5.5 5.5 L10 1" fill="none" stroke="#111" stroke-width="1.9"/></svg></div>
<div class="btn v" style="left:1875px;top:44px;width:35px;height:23px;line-height:22px;font-size:11.5px;letter-spacing:0;border-color:#666">Go</div>
<div class="abs a" style="left:1019.5px;top:80px;line-height:14px;color:#000">Part Desc</div>
<div class="inp dis" style="left:1019px;top:93px;width:322px;height:24px;line-height:22px">SCALE</div>
<div class="abs a" style="left:1019.5px;top:116px;line-height:14px;color:#000">Manufacturer</div>
<div class="inp" style="left:1019px;top:129px;width:322px;height:24px;line-height:22px"></div>
<div class="abs a" style="left:1019.5px;top:152px;line-height:14px;color:#000">Timex / Replacement Value</div>
<div class="inp" style="left:1019px;top:165px;width:107px;height:24px;line-height:22px">0</div>
<div class="inp" style="left:1129px;top:165px;width:106px;height:24px;line-height:22px">0</div>
<div class="sel" style="left:1238px;top:165px;width:103px;height:24px;line-height:22px">CAD<svg width="11" height="7" viewBox="0 0 11 7"><path d="M1 1 L5.5 5.5 L10 1" fill="none" stroke="#111" stroke-width="1.9"/></svg></div>
<div class="abs a" style="left:1347.5px;top:80px;line-height:14px;color:#000">Part Number</div>
<div class="inp" style="left:1347px;top:93px;width:267px;height:24px;line-height:22px;border:2px solid #111;border-radius:4px;line-height:20px;padding-left:4px">EHP-60S<span style="display:inline-block;width:1px;height:13px;background:#000;vertical-align:-2px;margin-left:0"></span></div>
<div class="abs a" style="left:1347.5px;top:116px;line-height:14px;color:#000">Qty</div>
<div class="inp dis" style="left:1347px;top:129px;width:230px;height:24px;line-height:22px">1</div>
<svg class="abs" style="left:1597.5px;top:134px" width="15" height="13" viewBox="0 0 21 18"><g fill="#111"><path d="M3.2 3.6 H8.6 V10.6 H7.2 V18 H0.2 V14.6 Z"/><path d="M17.8 3.6 H12.4 V10.6 H13.8 V18 H20.8 V14.6 Z"/><rect x="9.2" y="3.6" width="2.6" height="7"/><rect x="3.6" y="0" width="4.8" height="2.8" opacity=".85"/><rect x="12.6" y="0" width="4.8" height="2.8" opacity=".85"/></g></svg>
<div class="abs a" style="left:1347.5px;top:152px;line-height:14px;color:#000">ReSale Value</div>
<div class="inp" style="left:1347px;top:165px;width:128px;height:24px;line-height:22px">0</div>
<div class="sel" style="left:1481px;top:165px;width:133px;height:24px;line-height:22px">CAD<svg width="11" height="7" viewBox="0 0 11 7"><path d="M1 1 L5.5 5.5 L10 1" fill="none" stroke="#111" stroke-width="1.9"/></svg></div>
<div class="abs a" style="left:1622.5px;top:80px;line-height:14px;color:#000">ATA</div>
<div class="inp dis" style="left:1622px;top:93px;width:284px;height:24px;line-height:22px">TOOL</div>
<div class="abs a" style="left:1622.5px;top:116px;line-height:14px;color:#000">Inventory Type</div>
<div class="sel" style="left:1622px;top:129px;width:284px;height:24px;line-height:22px">TOOL<svg width="11" height="7" viewBox="0 0 11 7"><path d="M1 1 L5.5 5.5 L10 1" fill="none" stroke="#111" stroke-width="1.9"/></svg></div>
<div class="abs a" style="left:1622.5px;top:152px;line-height:14px;color:#000">Item Class</div>
<div class="sel" style="left:1622px;top:165px;width:284px;height:24px;line-height:22px">[MISC] NCA<svg width="11" height="7" viewBox="0 0 11 7"><path d="M1 1 L5.5 5.5 L10 1" fill="none" stroke="#111" stroke-width="1.9"/></svg></div>
<div class="btn" style="left:1622px;top:191px;width:284px;height:24px;line-height:22px;font-size:10.67px">Inventory Classification</div>
<div class="abs a" style="left:1019.5px;top:196px;line-height:14px;color:#000">Stores Comments:</div>
<div class="inp" style="left:1019px;top:217px;width:887px;height:34px;line-height:14px;padding-top:3px;padding-left:6px">CALIBRATE YEARLY</div>
<svg class="abs" style="left:1895px;top:240px" width="9" height="9" viewBox="0 0 9 9"><path d="M0.5 8.5 L8.5 0.5 M4.5 8.5 L8.5 4.5" stroke="#666" stroke-width="1"/></svg>
<div class="abs a" style="right:751px;top:263px;line-height:14px;color:#000">Track Hrs:</div>
<div class="cb on" style="left:1169px;top:265px"><svg width="13" height="13" viewBox="0 0 13 13"><path d="M2.8 6.8 L5.3 9.3 L10.2 3.6" fill="none" stroke="#fff" stroke-width="1.9"/></svg></div>
<div class="abs a" style="right:807px;top:281px;line-height:14px;color:#000">Track</div>
<div class="sel" style="left:1113px;top:278px;width:53px;height:24px;line-height:22px;padding-left:9px">Ldg<svg width="11" height="7" viewBox="0 0 11 7"><path d="M1 1 L5.5 5.5 L10 1" fill="none" stroke="#111" stroke-width="1.9"/></svg></div>
<div class="cb on" style="left:1169px;top:289px"><svg width="13" height="13" viewBox="0 0 13 13"><path d="M2.8 6.8 L5.3 9.3 L10.2 3.6" fill="none" stroke="#fff" stroke-width="1.9"/></svg></div>
<div class="abs a" style="right:751px;top:304px;line-height:14px;color:#000">Track Cal:</div>
<div class="cb on" style="left:1169px;top:306px"><svg width="13" height="13" viewBox="0 0 13 13"><path d="M2.8 6.8 L5.3 9.3 L10.2 3.6" fill="none" stroke="#fff" stroke-width="1.9"/></svg></div>
<div class="abs a" style="right:516px;top:263px;line-height:14px;color:#000">Master:</div>
<div class="cb dison" style="left:1404px;top:265px"><svg width="13" height="13" viewBox="0 0 13 13"><path d="M2.8 6.8 L5.3 9.3 L10.2 3.6" fill="none" stroke="#f4f4f4" stroke-width="1.9"/></svg></div>
<div class="abs a" style="right:516px;top:284px;line-height:14px;color:#000">Obsolete:</div>
<div class="cb" style="left:1404px;top:286px"></div>
<div class="abs a" style="right:516px;top:304px;line-height:14px;color:#000">Treat as Dead:</div>
<div class="cb" style="left:1404px;top:306px"></div>
<div class="abs a" style="right:321px;top:263px;line-height:14px;color:#000">Kit:</div>
<div class="cb" style="left:1599px;top:265px"></div>
<div class="abs a" style="right:321px;top:284px;line-height:14px;color:#000">Mod HSO/ LSO</div>
<div class="cb" style="left:1599px;top:286px"></div>
<div class="abs a" style="right:321px;top:304px;line-height:14px;color:#000">Track Shelf Life:</div>
<div class="cb on" style="left:1599px;top:306px"><svg width="13" height="13" viewBox="0 0 13 13"><path d="M2.8 6.8 L5.3 9.3 L10.2 3.6" fill="none" stroke="#fff" stroke-width="1.9"/></svg></div>
<div class="btn" style="left:1622px;top:253px;width:140px;height:24px;line-height:22px;font-size:10.67px">Save</div>
<div class="btn" style="left:1764px;top:253px;width:140px;height:24px;line-height:22px;font-size:10.67px">Cascade</div>
<div class="btn" style="left:1622px;top:279px;width:140px;height:24px;line-height:22px;font-size:10.67px">Change PD</div>
<div class="btn" style="left:1764px;top:279px;width:140px;height:24px;line-height:22px;font-size:10.67px">Update Due</div>
<div class="btn" style="left:1622px;top:305px;width:140px;height:24px;line-height:22px;font-size:10.67px">View Config</div>
<div class="btn" style="left:1764px;top:305px;width:140px;height:24px;line-height:22px;font-size:10.67px">Ordering Rules</div>
<div class="abs" style="left:1019px;top:333px;width:1px;height:580px;background:#cfcfcf"></div>
<div class="abs" style="left:1905px;top:333px;width:1px;height:580px;background:#cfcfcf"></div>
<div class="tabrow" style="left:1019px;top:333px;width:887px;height:29px"></div>
<div class="tabsep" style="left:1314px;top:333px;height:29px"></div>
<div class="tabsep" style="left:1610px;top:333px;height:29px"></div>
<div class="redbox" style="left:1017px;top:331px;width:298px;height:31px"></div>
<div class="abs a" style="left:1030.5px;top:341px;line-height:14px;color:#000">Life Constraint *</div>
<div class="abs a" style="left:1325.5px;top:341px;line-height:14px;color:#000">Initial Constraint *</div>
<div class="abs a" style="left:1620.5px;top:341px;line-height:14px;color:#000">Repeat Constraint *</div>
<div class="abs a" style="left:1030.5px;top:368px;line-height:14px;color:#000">Hrs Limit</div>
<div class="cb on" style="left:1078px;top:370px"><svg width="13" height="13" viewBox="0 0 13 13"><path d="M2.8 6.8 L5.3 9.3 L10.2 3.6" fill="none" stroke="#fff" stroke-width="1.9"/></svg></div>
<div class="abs a" style="left:1262px;top:368px;line-height:14px;color:#000">Ldg Limit</div>
<div class="cb" style="left:1311px;top:370px"></div>
<div class="abs a" style="left:1494px;top:368px;line-height:14px;color:#000">Cal Limit</div>
<div class="cb" style="left:1542px;top:370px"></div>
<div class="abs a" style="left:1030.5px;top:390px;line-height:14px;color:#000">Hrs:</div>
<div class="inp" style="left:1131px;top:383px;width:121px;height:24px;line-height:22px">55000</div>
<div class="abs a" style="left:1262px;top:391px;line-height:14px;color:#000">Ldg</div>
<div class="inp dis" style="left:1363px;top:383px;width:122px;height:24px;line-height:22px">0</div>
<div class="abs a" style="left:1494px;top:390px;line-height:14px;color:#000">Value:</div>
<div class="inp dis" style="left:1584px;top:383px;width:160px;height:24px;line-height:22px">0</div>
<div class="sel dis" style="left:1745px;top:383px;width:160px;height:24px;line-height:22px">Days<svg width="11" height="7" viewBox="0 0 11 7"><path d="M1 1 L5.5 5.5 L10 1" fill="none" stroke="#8a8a8a" stroke-width="1.9"/></svg></div>
<div class="abs a" style="left:1030.5px;top:416px;line-height:14px;color:#000">Tol:</div>
<div class="inp" style="left:1131px;top:409px;width:121px;height:24px;line-height:22px">0</div>
<div class="abs a" style="left:1262px;top:416px;line-height:14px;color:#000">Tol:</div>
<div class="inp dis" style="left:1363px;top:409px;width:122px;height:24px;line-height:22px">0</div>
<div class="abs a" style="left:1494px;top:416px;line-height:14px;color:#000">Tol:</div>
<div class="inp dis" style="left:1584px;top:409px;width:160px;height:24px;line-height:22px">0</div>
<div class="sel dis" style="left:1745px;top:409px;width:160px;height:24px;line-height:22px">Days<svg width="11" height="7" viewBox="0 0 11 7"><path d="M1 1 L5.5 5.5 L10 1" fill="none" stroke="#8a8a8a" stroke-width="1.9"/></svg></div>
<div class="abs a" style="left:1030.5px;top:438px;line-height:14px;color:#000">Desc:</div>
<div class="inp" style="left:1131px;top:435px;width:321px;height:24px;line-height:22px">SCALE</div>
<div class="btn" style="left:1455px;top:435px;width:24px;height:22px;line-height:22px;font-size:11px;color:#555;border-color:#999">...</div>
<div class="abs a" style="left:1483.5px;top:438px;line-height:14px;color:#000">Whichever is Later</div>
<div class="cb disoff" style="left:1575px;top:439px;width:12px;height:12px"></div>
<div class="abs a" style="left:1591px;top:438px;line-height:14px;color:#000">Requires Removal</div>
<div class="cb" style="left:1681px;top:439px"></div>
<div class="abs a" style="left:1030.5px;top:464px;line-height:14px;color:#000">Notes:</div>
<div class="inp" style="left:1131px;top:461px;width:322px;height:24px;line-height:22px"></div>
<div class="btn" style="left:1456px;top:461px;width:24px;height:22px;line-height:22px;font-size:11px;color:#555;border-color:#999">...</div>
<div class="abs a" style="left:1494px;top:464px;line-height:14px;color:#000">Planning Cat:</div>
<div class="sel" style="left:1584px;top:461px;width:321px;height:24px;line-height:22px">Normal (30)<svg width="11" height="7" viewBox="0 0 11 7"><path d="M1 1 L5.5 5.5 L10 1" fill="none" stroke="#111" stroke-width="1.9"/></svg></div>
<div class="tabrow" style="left:1019px;top:487px;width:887px;height:29px"></div>
<div class="tabsep" style="left:1314px;top:487px;height:29px"></div>
<div class="tabsep" style="left:1610px;top:487px;height:29px"></div>
<div class="redbox" style="left:1313px;top:486px;width:298px;height:31px"></div>
<div class="abs a" style="left:1030.5px;top:495px;line-height:14px;color:#000">Life Constraint *</div>
<div class="abs a" style="left:1325.5px;top:495px;line-height:14px;color:#000">Initial Constraint *</div>
<div class="abs a" style="left:1620.5px;top:495px;line-height:14px;color:#000">Repeat Constraint *</div>
<div class="abs a" style="right:683px;top:518px;line-height:14px;color:#000">Hrs Limit</div>
<div class="cb" style="left:1239px;top:520px"></div>
<div class="abs a" style="right:450px;top:518px;line-height:14px;color:#000">Ldg Limit</div>
<div class="cb on" style="left:1472px;top:520px"><svg width="13" height="13" viewBox="0 0 13 13"><path d="M2.8 6.8 L5.3 9.3 L10.2 3.6" fill="none" stroke="#fff" stroke-width="1.9"/></svg></div>
<div class="abs a" style="right:31px;top:518px;line-height:14px;color:#000">Cal Limit</div>
<div class="cb" style="left:1892px;top:520px"></div>
<div class="abs a" style="left:1030.5px;top:540px;line-height:14px;color:#000">Hrs:</div>
<div class="inp dis" style="left:1131px;top:533px;width:121px;height:24px;line-height:22px">0</div>
<div class="abs a" style="left:1262px;top:541px;line-height:14px;color:#000">Ldg</div>
<div class="inp" style="left:1363px;top:533px;width:122px;height:24px;line-height:22px">5000</div>
<div class="abs a" style="left:1494px;top:540px;line-height:14px;color:#000">Value:</div>
<div class="inp dis" style="left:1584px;top:533px;width:160px;height:24px;line-height:22px">0</div>
<div class="sel dis" style="left:1745px;top:533px;width:160px;height:24px;line-height:22px">Days<svg width="11" height="7" viewBox="0 0 11 7"><path d="M1 1 L5.5 5.5 L10 1" fill="none" stroke="#8a8a8a" stroke-width="1.9"/></svg></div>
<div class="abs a" style="left:1030.5px;top:566px;line-height:14px;color:#000">Tol:</div>
<div class="inp dis" style="left:1131px;top:559px;width:121px;height:24px;line-height:22px">0</div>
<div class="abs a" style="left:1262px;top:566px;line-height:14px;color:#000">Tol:</div>
<div class="inp" style="left:1363px;top:559px;width:122px;height:24px;line-height:22px">0</div>
<div class="abs a" style="left:1494px;top:566px;line-height:14px;color:#000">Tol:</div>
<div class="inp dis" style="left:1584px;top:559px;width:160px;height:24px;line-height:22px">0</div>
<div class="sel dis" style="left:1745px;top:559px;width:160px;height:24px;line-height:22px">Days<svg width="11" height="7" viewBox="0 0 11 7"><path d="M1 1 L5.5 5.5 L10 1" fill="none" stroke="#8a8a8a" stroke-width="1.9"/></svg></div>
<div class="abs a" style="left:1030.5px;top:588px;line-height:14px;color:#000">Desc:</div>
<div class="inp" style="left:1131px;top:585px;width:321px;height:24px;line-height:22px">SCALE</div>
<div class="btn" style="left:1455px;top:585px;width:24px;height:22px;line-height:22px;font-size:11px;color:#555;border-color:#999">...</div>
<div class="abs a" style="left:1483.5px;top:588px;line-height:14px;color:#000">Whichever is Later</div>
<div class="cb disoff" style="left:1575px;top:589px;width:12px;height:12px"></div>
<div class="abs a" style="left:1591px;top:588px;line-height:14px;color:#000">Requires Removal</div>
<div class="cb" style="left:1681px;top:589px"></div>
<div class="abs a" style="left:1030.5px;top:614px;line-height:14px;color:#000">Notes:</div>
<div class="inp" style="left:1131px;top:611px;width:322px;height:24px;line-height:22px"></div>
<div class="btn" style="left:1456px;top:611px;width:24px;height:22px;line-height:22px;font-size:11px;color:#555;border-color:#999">...</div>
<div class="abs a" style="left:1494px;top:614px;line-height:14px;color:#000">Planning Cat:</div>
<div class="sel" style="left:1584px;top:611px;width:321px;height:24px;line-height:22px">Normal (30)<svg width="11" height="7" viewBox="0 0 11 7"><path d="M1 1 L5.5 5.5 L10 1" fill="none" stroke="#111" stroke-width="1.9"/></svg></div>
<div class="tabrow" style="left:1018px;top:636px;width:887px;height:29px"></div>
<div class="tabsep" style="left:1313px;top:636px;height:29px"></div>
<div class="tabsep" style="left:1609px;top:636px;height:29px"></div>
<div class="redbox" style="left:1609px;top:633px;width:298px;height:33px"></div>
<div class="abs a" style="left:1029.5px;top:644px;line-height:14px;color:#000">Life Constraint *</div>
<div class="abs a" style="left:1324.5px;top:644px;line-height:14px;color:#000">Initial Constraint *</div>
<div class="abs a" style="left:1619.5px;top:644px;line-height:14px;color:#000">Repeat Constraint *</div>
<div class="abs a" style="right:684px;top:667px;line-height:14px;color:#000">Hrs Limit</div>
<div class="cb" style="left:1238px;top:669px"></div>
<div class="abs a" style="right:451px;top:667px;line-height:14px;color:#000">Ldg Limit</div>
<div class="cb" style="left:1471px;top:669px"></div>
<div class="abs a" style="right:32px;top:667px;line-height:14px;color:#000">Cal Limit</div>
<div class="cb on" style="left:1891px;top:669px"><svg width="13" height="13" viewBox="0 0 13 13"><path d="M2.8 6.8 L5.3 9.3 L10.2 3.6" fill="none" stroke="#fff" stroke-width="1.9"/></svg></div>
<div class="abs a" style="left:1029.5px;top:689px;line-height:14px;color:#000">Hrs:</div>
<div class="inp dis" style="left:1130px;top:682px;width:121px;height:24px;line-height:22px">0</div>
<div class="abs a" style="left:1261px;top:690px;line-height:14px;color:#000">Ldg</div>
<div class="inp dis" style="left:1362px;top:682px;width:122px;height:24px;line-height:22px">0</div>
<div class="abs a" style="left:1493px;top:689px;line-height:14px;color:#000">Value:</div>
<div class="inp" style="left:1583px;top:682px;width:160px;height:24px;line-height:22px">12</div>
<div class="sel" style="left:1744px;top:682px;width:160px;height:24px;line-height:22px">Months<svg width="11" height="7" viewBox="0 0 11 7"><path d="M1 1 L5.5 5.5 L10 1" fill="none" stroke="#111" stroke-width="1.9"/></svg></div>
<div class="abs a" style="left:1029.5px;top:715px;line-height:14px;color:#000">Tol:</div>
<div class="inp dis" style="left:1130px;top:708px;width:121px;height:24px;line-height:22px">0</div>
<div class="abs a" style="left:1261px;top:715px;line-height:14px;color:#000">Tol:</div>
<div class="inp dis" style="left:1362px;top:708px;width:122px;height:24px;line-height:22px">0</div>
<div class="abs a" style="left:1493px;top:715px;line-height:14px;color:#000">Tol:</div>
<div class="inp" style="left:1583px;top:708px;width:160px;height:24px;line-height:22px">0</div>
<div class="sel" style="left:1744px;top:708px;width:160px;height:24px;line-height:22px">Days<svg width="11" height="7" viewBox="0 0 11 7"><path d="M1 1 L5.5 5.5 L10 1" fill="none" stroke="#111" stroke-width="1.9"/></svg></div>
<div class="abs a" style="left:1029.5px;top:737px;line-height:14px;color:#000">Desc:</div>
<div class="inp" style="left:1130px;top:734px;width:321px;height:24px;line-height:22px">SCALE</div>
<div class="btn" style="left:1454px;top:734px;width:24px;height:22px;line-height:22px;font-size:11px;color:#555;border-color:#999">...</div>
<div class="abs a" style="left:1482.5px;top:737px;line-height:14px;color:#000">High Freq Item</div>
<div class="cb" style="left:1556px;top:738px"></div>
<div class="abs a" style="left:1572px;top:737px;line-height:14px;color:#000">Whichever is Later</div>
<div class="cb disoff" style="left:1664px;top:738px;width:12px;height:12px"></div>
<div class="abs a" style="left:1679.5px;top:737px;line-height:14px;color:#000">Requires Removal</div>
<div class="cb" style="left:1770px;top:738px"></div>
<div class="abs a" style="left:1029.5px;top:763px;line-height:14px;color:#000">Notes:</div>
<div class="inp" style="left:1130px;top:760px;width:322px;height:24px;line-height:22px"></div>
<div class="btn" style="left:1455px;top:760px;width:24px;height:22px;line-height:22px;font-size:11px;color:#555;border-color:#999">...</div>
<div class="abs a" style="left:1493px;top:763px;line-height:14px;color:#000">Planning Cat:</div>
<div class="sel" style="left:1583px;top:760px;width:321px;height:24px;line-height:22px">Normal (30)<svg width="11" height="7" viewBox="0 0 11 7"><path d="M1 1 L5.5 5.5 L10 1" fill="none" stroke="#111" stroke-width="1.9"/></svg></div>
<div class="abs" style="left:1019px;top:785px;width:886px;height:1px;background:#dedede"></div>
<div class="tabrow" style="left:1019px;top:786px;width:885px;height:28px"></div>
<div class="abs" style="left:1020px;top:786px;width:175px;height:28px;background:#f1f1f1"></div>
<div class="tabsep" style="left:1372px;top:786px;height:28px"></div>
<div class="tabsep" style="left:1549px;top:786px;height:28px"></div>
<div class="tabsep" style="left:1726px;top:786px;height:28px"></div>
<div class="abs a" style="left:1029.5px;top:793px;line-height:14px;color:#000">Applic Inst</div>
<div class="abs a" style="left:1206.5px;top:793px;line-height:14px;color:#000">Triggers &amp; Notes</div>
<div class="abs a" style="left:1383.5px;top:793px;line-height:14px;color:#000">Scan Doc</div>
<div class="abs a" style="left:1560.5px;top:793px;line-height:14px;color:#000">Vendors</div>
<div class="abs a" style="left:1738px;top:793px;line-height:14px;color:#000">Cross Ref</div>
<div class="abs" style="left:1023px;top:818px;width:877px;height:100px;background:#fff;border-top:2px solid #8b8b8b;border-left:2px solid #8b8b8b;border-right:3px solid #ececec"></div>
<div class="abs" style="left:1025px;top:820px;width:872px;height:33px;background:#c5cfd6;border-bottom:1px solid #111"></div>
<div class="abs v" style="left:1025px;top:821px;width:47px;height:18px;line-height:16px;text-align:center;border:1px solid #8a8a8a;border-radius:3px;background:#f0f0f0;color:#111">Add</div>
<div class="abs v" style="left:1850px;top:821px;width:47px;height:18px;line-height:16px;text-align:center;border:1px solid #8a8a8a;border-radius:3px;background:#f0f0f0;color:#111">Copy</div>
<div class="abs v" style="left:1073px;top:823px;line-height:14px;color:#111">ATA - Part Desc - Part Num</div>
<div class="abs v" style="left:1073px;top:839px;line-height:14px;color:#111">MEL</div>
<div class="abs v" style="left:1330px;top:839px;line-height:14px;color:#111">Zone</div>
<div class="abs v" style="left:1598px;top:839px;line-height:14px;color:#111">Area</div>
<div class="abs v" style="right:21px;top:839px;line-height:14px;color:#111">Template</div>
<div class="abs v" style="left:1073px;top:853px;line-height:14px;color:#111">No Entries</div>
</body></html>
